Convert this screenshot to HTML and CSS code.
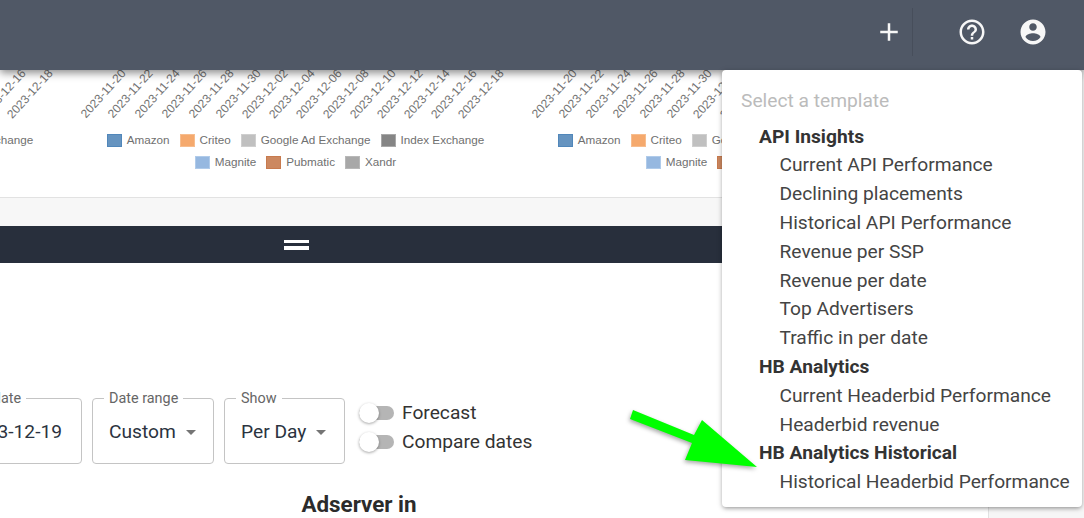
FILE: index.html
```html
<!DOCTYPE html>
<html lang="en">
<head>
<meta charset="utf-8">
<title>Templates</title>
<link rel="stylesheet" href="styles.css">
</head>
<body>
<header class="topbar">
  <button class="icon-btn add-btn"><svg viewBox="0 0 24 24"><path d="M19 13h-6v6h-2v-6H5v-2h6V5h2v6h6v2z"/></svg></button>
  <span class="divider"></span>
  <button class="icon-btn help-btn"><svg viewBox="0 0 24 24"><path d="M11 18h2v-2h-2v2zm1-16C6.48 2 2 6.48 2 12s4.48 10 10 10 10-4.48 10-10S17.52 2 12 2zm0 18c-4.41 0-8-3.59-8-8s3.59-8 8-8 8 3.59 8 8-3.59 8-8 8zm0-14c-2.21 0-4 1.79-4 4h2c0-1.1.9-2 2-2s2 .9 2 2c0 2-3 1.75-3 5h2c0-2.25 3-2.5 3-5 0-2.21-1.79-4-4-4z"/></svg></button>
  <button class="icon-btn user-btn"><svg viewBox="0 0 24 24"><path d="M12 2C6.48 2 2 6.48 2 12s4.48 10 10 10 10-4.48 10-10S17.52 2 12 2zm0 3c1.66 0 3 1.34 3 3s-1.34 3-3 3-3-1.34-3-3 1.34-3 3-3zm0 14.2c-2.5 0-4.71-1.28-6-3.22.03-1.99 4-3.08 6-3.08 1.99 0 5.97 1.09 6 3.08-1.29 1.94-3.5 3.22-6 3.22z"/></svg></button>
</header>

<div class="layout">
  <main class="main">
    <section class="charts">
      <div class="chart" data-chart></div>
      <div class="chart" data-chart></div>
      <div class="chart" data-chart></div>
    </section>
    <div class="strip"></div>
    <div class="darkbar"><span class="burger"><i></i><i></i></span></div>
    <form class="filters">
      <fieldset class="field date-field"><legend>End date</legend><span class="value">2023-12-19</span></fieldset>
      <fieldset class="field range-field"><legend>Date range</legend><span class="value">Custom</span><span class="caret"></span></fieldset>
      <fieldset class="field show-field"><legend>Show</legend><span class="value">Per Day</span><span class="caret"></span></fieldset>
      <div class="switches">
        <label class="switch"><span class="track"><span class="thumb"></span></span>Forecast</label>
        <label class="switch"><span class="track"><span class="thumb"></span></span>Compare dates</label>
      </div>
    </form>
    <h2 class="title">Adserver in</h2>
  </main>
  <aside class="side"></aside>
</div>

<nav class="menu">
  <p class="menu-head">Select a template</p>
  <h3>API Insights</h3>
  <ul>
    <li>Current API Performance</li>
    <li>Declining placements</li>
    <li>Historical API Performance</li>
    <li>Revenue per SSP</li>
    <li>Revenue per date</li>
    <li>Top Advertisers</li>
    <li>Traffic in per date</li>
  </ul>
  <h3>HB Analytics</h3>
  <ul>
    <li>Current Headerbid Performance</li>
    <li>Headerbid revenue</li>
  </ul>
  <h3>HB Analytics Historical</h3>
  <ul>
    <li>Historical Headerbid Performance</li>
  </ul>
</nav>

<svg class="arrow" viewBox="0 0 140 70" width="140" height="70"><polygon points="3,2 64,27 72,12 127,59 55,52 62,35 0,11"/></svg>

<script>
  var dates = ["2023-11-20","2023-11-22","2023-11-24","2023-11-26","2023-11-28","2023-11-30","2023-12-02","2023-12-04","2023-12-06","2023-12-08","2023-12-10","2023-12-12","2023-12-14","2023-12-16","2023-12-18"];
  var row1 = [["Amazon","s-amazon"],["Criteo","s-criteo"],["Google Ad Exchange","s-google"],["Index Exchange","s-index"]];
  var row2 = [["Magnite","s-magnite"],["Pubmatic","s-pubmatic"],["Xandr","s-xandr"]];
  function legendRow(items){
    return '<div class="legend-row">' + items.map(function(i){
      return '<span class="legend-item"><b class="swatch ' + i[1] + '"></b>' + i[0] + '</span>';
    }).join('') + '</div>';
  }
  document.querySelectorAll('[data-chart]').forEach(function(c){
    c.innerHTML = '<div class="ticks">' + dates.map(function(d){
      return '<span class="tick"><span>' + d + '</span></span>';
    }).join('') + '</div><div class="legend">' + legendRow(row1) + legendRow(row2) + '</div>';
  });
</script>
</body>
</html>
```

FILE: styles.css
```css
* { box-sizing: border-box; }
html, body { margin: 0; padding: 0; height: 100%; overflow: hidden; }
body {
  background: #fff;
  font-family: Roboto, "Liberation Sans", sans-serif;
  font-size: 19.2px;
  color: #2b3340;
  width: 1084px;
  height: 518px;
}

/* top bar */
.topbar {
  position: relative;
  z-index: 3;
  height: 70px;
  background: #505866;
  box-shadow: 0 3px 8px rgba(0, 0, 0, .45);
  display: flex;
  align-items: center;
  justify-content: flex-end;
  padding: 0 36px 6px 0;
}
.icon-btn {
  border: 0;
  padding: 0;
  background: none;
  width: 30px;
  height: 30px;
  display: block;
}
.icon-btn svg { display: block; width: 30px; height: 30px; fill: #f7f7f7; }
.divider { width: 1px; height: 48px; background: #474e5b; margin: 0 44px 0 8px; }
.user-btn { margin-left: 31px; }

/* page frame */
.layout { display: flex; height: 448px; }
.main { flex: 0 0 988px; min-width: 0; overflow: hidden; }
.side { flex: 1; background: #f6f6f6; border-left: 1px solid #e2e2e2; }

/* charts */
.charts {
  display: flex;
  height: 127px;
  margin-left: -381px;
  background: #fff;
}
.chart { flex: 0 0 451px; min-width: 0; }
.ticks {
  display: flex;
  height: 61px;
  margin-top: -6px;
  padding-left: 27px;
}
.tick {
  flex: 0 0 26.95px;
  min-width: 0;
  display: flex;
  justify-content: flex-end;
  height: 14px;
}
.tick span {
  flex: none;
  font: 12px/14px "Liberation Sans", Arial, sans-serif;
  color: #737373;
  transform: rotate(-48deg);
  transform-origin: 100% 50%;
}
.legend {
  margin-top: 4px;
  font: 11.7px/14px "Liberation Sans", Arial, sans-serif;
  color: #707070;
}
.legend-row {
  display: flex;
  justify-content: center;
  gap: 10px;
  height: 22px;
  align-items: center;
}
.legend-item { display: flex; align-items: center; gap: 5px; white-space: nowrap; }
.swatch { width: 15px; height: 13px; border: 1px solid; display: block; }
.s-amazon { background: #6694c0; border-color: #5187ba; }
.s-criteo { background: #f5a96d; border-color: #f7bd8e; }
.s-google { background: #c0c0c0; border-color: #cfcfcf; }
.s-index { background: #858585; border-color: #a8a8a8; }
.s-magnite { background: #96b8e0; border-color: #b0cbea; }
.s-pubmatic { background: #cc8860; border-color: #c77a4e; }
.s-xandr { background: #a8a8a8; border-color: #b8b8b8; }

/* bars */
.strip { height: 29px; background: #f7f7f7; border-top: 1px solid #e2e2e2; }
.darkbar {
  height: 37px;
  background: #282f3c;
  display: flex;
  align-items: center;
  padding-left: 284px;
}
.burger { display: flex; flex-direction: column; gap: 3px; width: 25px; }
.burger i { display: block; height: 3.5px; background: #fff; }

/* filters */
.filters {
  display: flex;
  align-items: flex-end;
  gap: 10px;
  height: 78px;
  margin: 123px 0 0 -52px;
}
.field {
  margin: 0;
  padding: 0 16px 6px;
  height: 74px;
  min-width: 0;
  flex: none;
  border: 1px solid #c4c4c4;
  border-radius: 4px;
  display: flex;
  align-items: center;
  gap: 10px;
  white-space: nowrap;
}
.field legend {
  font-size: 14.4px;
  line-height: 17px;
  color: #666;
  padding: 0 5px;
  margin-left: -5px;
}
.value { line-height: 22px; }
.date-field { width: 134px; justify-content: flex-end; padding-right: 19px; }
.range-field { width: 122px; }
.show-field { width: 121px; }
.caret {
  width: 0;
  height: 0;
  border-left: 5.5px solid transparent;
  border-right: 5.5px solid transparent;
  border-top: 5.5px solid #757575;
}
.switches { display: flex; flex-direction: column; align-self: flex-start; margin: 12px 0 0 4px; }
.switch { display: flex; align-items: center; gap: 8px; height: 29px; color: #333; }
.track {
  width: 35px;
  height: 14px;
  background: #b5b5b5;
  border-radius: 7px;
  display: flex;
  align-items: center;
}
.thumb {
  width: 20px;
  height: 20px;
  flex: none;
  border-radius: 50%;
  background: #fff;
  box-shadow: 0 1px 3px rgba(0, 0, 0, .35);
}
.title {
  margin: 27px 0 0;
  width: 718px;
  text-align: center;
  font-size: 22.4px;
  line-height: 26px;
  font-weight: 700;
  color: #2b2b2b;
}

/* template menu */
.menu {
  position: absolute;
  z-index: 4;
  left: 722px;
  top: 70px;
  width: 360px;
  height: 437px;
  padding: 17px 0 0 19px;
  background: #fff;
  border-radius: 4px;
  box-shadow: 0 2px 4px -1px rgba(0,0,0,.35), 0 1px 6px rgba(0,0,0,.14);
  line-height: 28.8px;
  color: #444;
}
.menu-head { margin: 0 0 6.85px; color: #bbb; }
.menu h3 { margin: 0 0 0 18px; font-size: 19.2px; font-weight: 700; color: #333; }
.menu ul { list-style: none; margin: 0; padding: 0 0 0 38.5px; }

.arrow {
  position: absolute;
  z-index: 5;
  left: 630px;
  top: 408px;
  fill: #00ff00;
  filter: drop-shadow(-1px 2px 2px rgba(0,0,0,.35));
  overflow: visible;
}
```
